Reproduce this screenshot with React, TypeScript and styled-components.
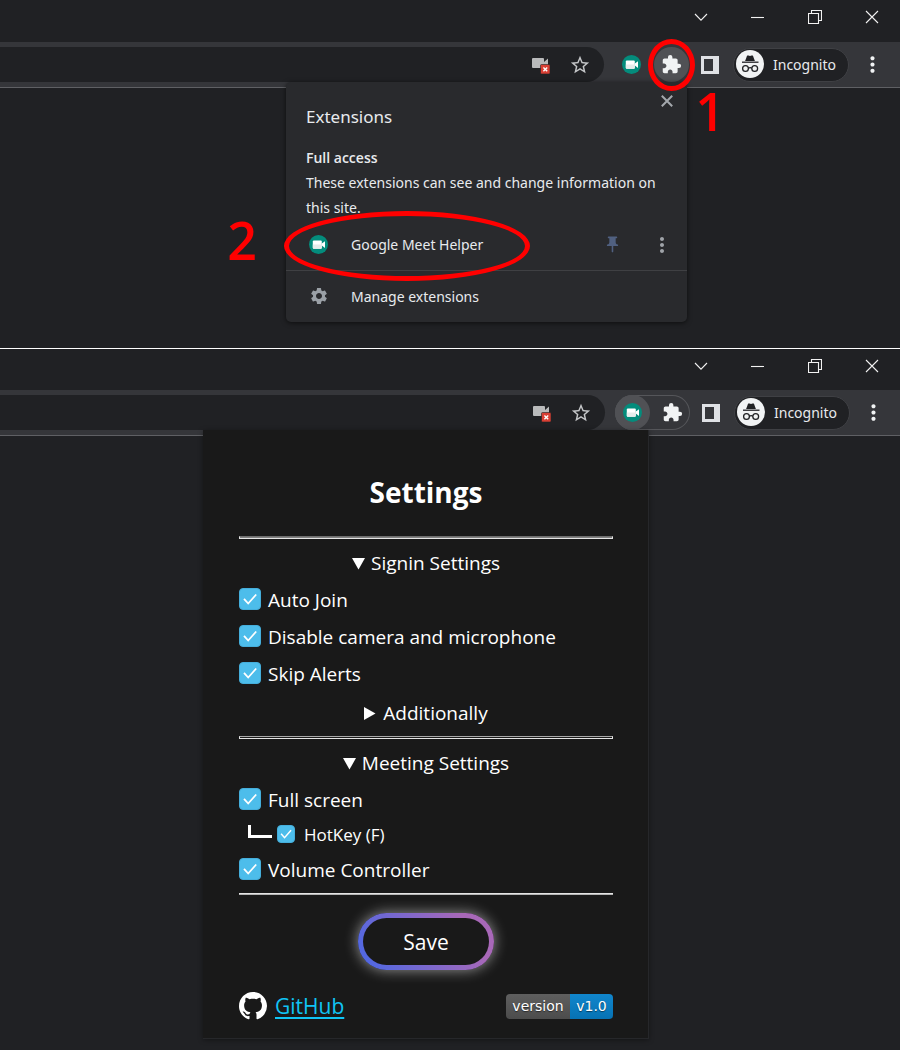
import React from "react";
import styled, { createGlobalStyle, css } from "styled-components";
import { MdExtension, MdStarBorder, MdSettings, MdPushPin, MdMoreVert } from "react-icons/md";

const GlobalStyle = createGlobalStyle`
  *, *::before, *::after { box-sizing: border-box; }
  body { margin: 0; background: #202124; }
  body, button, input { font-family: "Open Sans", "Noto Sans", sans-serif; }
  button { color: inherit; }
`;

const Page = styled.main`
  display: flex;
  flex-direction: column;
  min-height: 100vh;
`;

/* ---------- browser window ---------- */

const BrowserWindow = styled.section<{ $divided?: boolean }>`
  position: relative;
  display: flex;
  flex-direction: column;
  background: #202124;
  color: #e8eaed;
  ${(p) => p.$divided && css`flex: 1;`}
`;

const TitleBar = styled.header<{ $divided?: boolean }>`
  display: flex;
  justify-content: flex-end;
  height: 42px;
  padding-bottom: 8px;
  ${(p) => p.$divided && css`border-top: 1px solid #fff;`}
`;

const CaptionButton = styled.button`
  display: grid;
  place-items: center;
  width: 57px;
  padding: 0;
  border: 0;
  background: none;
`;

const Toolbar = styled.div<{ $inset: number }>`
  display: flex;
  align-items: center;
  height: 46px;
  padding-right: ${(p) => p.$inset}px;
  background: #35363a;
  border-bottom: 1px solid #5f6064;
`;

const AddressBar = styled.div`
  flex: 1;
  display: flex;
  align-items: center;
  justify-content: flex-end;
  gap: 20px;
  height: 35px;
  padding-right: 14px;
  border-radius: 0 18px 18px 0;
  background: #202124;
`;

const IconButton = styled.button<{ $size?: number; $active?: boolean }>`
  display: grid;
  place-content: center;
  flex: none;
  width: ${(p) => p.$size ?? 20}px;
  height: ${(p) => p.$size ?? 20}px;
  padding: 0;
  border: 0;
  border-radius: 50%;
  background: ${(p) => (p.$active ? "#505155" : "none")};
`;

const ActionGroup = styled.div<{ $outlined?: boolean }>`
  display: flex;
  gap: 5px;
  margin: 0 11px 0 10px;
  border-radius: 18px;
  box-shadow: ${(p) => (p.$outlined ? "inset 0 0 0 1px #55565a" : "none")};
`;

const ProfileChip = styled.button`
  display: flex;
  align-items: center;
  gap: 9px;
  width: 116px;
  height: 34px;
  margin-left: 13px;
  padding: 0 0 1px 2px;
  border: 1px solid #3f4044;
  border-radius: 17px;
  background: #202124;
  color: #e8eaed;
  font-family: "Noto Sans", "Open Sans", sans-serif;
  font-size: 14px;
`;

const MenuButton = styled(IconButton)`
  width: 47px;
`;

const PageArea = styled.div<{ $edge: number; $below: number }>`
  display: flex;
  justify-content: flex-end;
  padding: 0 ${(p) => p.$edge}px ${(p) => p.$below}px 0;
`;

/* ---------- extensions menu ---------- */

const ExtensionsMenu = styled.div`
  position: relative;
  width: 401px;
  margin-top: -6px;
  padding-top: 20px;
  border-radius: 5px;
  background: #292a2d;
  box-shadow: 0 1px 5px rgba(0, 0, 0, 0.6);
  font-family: "Noto Sans", "Open Sans", sans-serif;
  font-size: 14px;
`;

const MenuClose = styled(IconButton)`
  position: absolute;
  top: 9px;
  right: 10px;
`;

const MenuTitle = styled.h2`
  margin: 0 20px 13px;
  font-size: 17px;
  font-weight: 400;
  line-height: 30px;
`;

const AccessHeading = styled.h3`
  margin: 0 20px;
  font-family: "Open Sans", "Noto Sans", sans-serif;
  font-size: 14px;
  font-weight: 600;
  line-height: 25px;
`;

const AccessText = styled.p`
  margin: 0 20px;
  line-height: 25px;
`;

const MenuRow = styled.div<{ $separated?: boolean }>`
  display: flex;
  align-items: center;
  height: ${(p) => (p.$separated ? 52 : 50)}px;
  padding: 0 15px 1px 23px;
  ${(p) => p.$separated && css`border-top: 1px solid #3f4043;`}
`;

const MenuItem = styled.button`
  flex: 1;
  display: grid;
  grid-template-columns: 20px 1fr;
  align-items: center;
  column-gap: 22px;
  padding: 0;
  border: 0;
  background: none;
  font-family: inherit;
  font-size: 14px;
  text-align: left;
`;

const RowTools = styled.div`
  display: flex;
  gap: 30px;
`;

/* ---------- annotations ---------- */

const Ring = styled.div<{ $top: number; $right: number; $w: number; $h: number }>`
  position: absolute;
  z-index: 2;
  top: ${(p) => p.$top}px;
  right: ${(p) => p.$right}px;
  width: ${(p) => p.$w}px;
  height: ${(p) => p.$h}px;
  border: 5px solid #f00;
  border-radius: 50%;
  pointer-events: none;
`;

const StepNumber = styled.span<{ $top: number; $right: number }>`
  position: absolute;
  z-index: 2;
  top: ${(p) => p.$top}px;
  right: ${(p) => p.$right}px;
  color: #f00;
  font-size: 52px;
  font-weight: 600;
  line-height: 52px;
`;

/* ---------- settings popup ---------- */

const SettingsPopup = styled.form`
  position: relative;
  width: 446px;
  margin-top: -6px;
  padding: 40px 35px 18px 36px;
  border: 1px solid #26272a;
  border-width: 0 1px 1px 0;
  background: #191919;
  box-shadow: 0 1px 5px rgba(0, 0, 0, 0.4);
  color: #fff;
  font-size: 19px;
`;

const SettingsTitle = styled.h1`
  margin: 0 0 22px;
  font-size: 28px;
  font-weight: 700;
  line-height: 44px;
  text-align: center;
`;

const Rule = styled.hr<{ $look: "filled" | "double" | "plain" }>`
  height: ${(p) => (p.$look === "plain" ? 2 : 3)}px;
  margin: 5px 0 0;
  border: 0 solid #e4e4e4;
  border-width: ${(p) => (p.$look === "plain" ? "1px 0" : "1px")};
  border-top-color: ${(p) => ({ filled: "#6e6e6e", double: "#a8a8a8", plain: "#e4e4e4" })[p.$look]};
  border-bottom-color: ${(p) => (p.$look === "plain" ? "#b4b4b4" : "#e4e4e4")};
  background: ${(p) => (p.$look === "filled" ? "#808080" : "#191919")};
`;

const Section = styled.details``;

const SectionTitle = styled.summary`
  display: flex;
  align-items: center;
  justify-content: center;
  gap: 6px;
  height: 36px;
  margin-top: 6px;
  list-style: none;
  &::-webkit-details-marker { display: none; }
`;

const Nested = styled.details`
  margin-top: -3px;
`;

const Option = styled.label`
  display: flex;
  align-items: center;
  gap: 7px;
  height: 37px;
`;

const SubOption = styled.label`
  display: flex;
  align-items: center;
  gap: 9px;
  height: 33px;
  padding-left: 9px;
  font-size: 17px;
`;

const Branch = styled.span`
  display: flex;
  gap: 5px;
`;

const CheckFrame = styled.span<{ $size: number }>`
  display: grid;
  width: ${(p) => p.$size}px;
  height: ${(p) => p.$size}px;
  margin-bottom: 2px;
  > * { grid-area: 1 / 1; width: 100%; height: 100%; }
  > svg { pointer-events: none; visibility: hidden; }
  > input:checked + svg { visibility: visible; }
`;

const CheckInput = styled.input`
  appearance: none;
  margin: 0;
  border: 1px solid #fff;
  border-radius: 4px;
  &:checked { border-color: #45aedb; background: #4dbdeb; }
`;

const SaveButton = styled.button`
  display: block;
  width: 136px;
  height: 57px;
  margin: 18px auto 0;
  border: 5px solid transparent;
  border-radius: 29px;
  background:
    linear-gradient(#191919, #191919) padding-box,
    linear-gradient(60deg, #5468e0 10%, #a868b8 80%) border-box;
  box-shadow: 0 0 14px rgba(255, 255, 255, 0.55);
  font-size: 21px;
`;

const Footer = styled.footer`
  display: flex;
  align-items: center;
  justify-content: space-between;
  height: 28px;
  margin-top: 22px;
`;

const RepoLink = styled.a`
  display: flex;
  align-items: center;
  gap: 8px;
  color: #10c4f5;
  font-size: 21px;
  text-decoration: none;
  span { text-decoration: underline; text-decoration-thickness: 2px; text-underline-offset: 3px; }
`;

const Badge = styled.span`
  display: flex;
  height: 25px;
  overflow: hidden;
  border-radius: 4px;
  font: 14px/25px "DejaVu Sans", Verdana, sans-serif;
  text-shadow: 0 1px 1px rgba(0, 0, 0, 0.5);
`;

const BadgePart = styled.span<{ $width: number; $from: string; $to: string }>`
  width: ${(p) => p.$width}px;
  background: linear-gradient(${(p) => p.$from}, ${(p) => p.$to});
  text-align: center;
`;

/* ---------- drawings ---------- */

const MeetIcon = () => (
  <svg width="19" height="19" viewBox="0 0 19 19">
    <circle cx="9.5" cy="9.5" r="9.5" fill="#048c7c" />
    <rect x="3.8" y="5.5" width="9" height="8.2" rx="1" fill="#fff" />
    <path d="M3.8 9.5h9v3.2a1 1 0 0 1-1 1h-7a1 1 0 0 1-1-1z" fill="#e6eceb" />
    <path d="M12.8 8.6l3.2-2.4v6.8l-3.2-2.4z" fill="#fff" />
  </svg>
);

const CameraBlockedIcon = () => (
  <svg width="18" height="18" viewBox="0 0 18 18">
    <path d="M1 2h10a1 1 0 0 1 1 1v3l4-3.500V11h-4v1H1a1 1 0 0 1-1-1V3a1 1 0 0 1 1-1z" fill="#b9babb" />
    <rect x="8.5" y="8.5" width="9.5" height="9.5" rx="1" fill="#d93f34" stroke="#202124" strokeWidth=".6" />
    <path d="M11.4 11.4l3.8 3.8m0-3.8l-3.8 3.8" stroke="#fff" strokeWidth="1.4" />
  </svg>
);

const SidePanelIcon = () => (
  <svg width="18" height="18" viewBox="0 0 18 18">
    <path fillRule="evenodd" d="M0 0h18v18H0zM3 3v12h9V3z" fill="#dfe1e5" />
  </svg>
);

const IncognitoIcon = () => (
  <svg width="28" height="28" viewBox="0 0 28 28">
    <circle cx="14" cy="14" r="14" fill="#f1f3f4" />
    <path d="M11.3 5.6c.4-.3.8-.2 1.2 0 1 .4 2 .4 3 0 .5-.2.9-.3 1.2 0 .3.3.5.8.7 1.4L18.9 11H9.1l1.5-4c.2-.6.4-1.1.7-1.4z" fill="#202124" />
    <path d="M6 12.2h16.5" stroke="#202124" strokeWidth="1.3" />
    <g fill="none" stroke="#202124" strokeWidth="1.3">
      <circle cx="9.5" cy="18.5" r="2.9" />
      <circle cx="18.7" cy="18.5" r="2.9" />
      <path d="M12.4 18.2q1.7-1 3.4 0" />
    </g>
  </svg>
);

const Caption = ({ d, label }: { d: string; label: string }) => (
  <CaptionButton type="button" aria-label={label}>
    <svg width="14" height="14" viewBox="0 0 14 14" fill="none" stroke="#f2f2f2" strokeWidth="1.1">
      <path d={d} />
    </svg>
  </CaptionButton>
);

const Triangle = ({ open }: { open?: boolean }) => (
  <svg width="13" height="13" viewBox="0 0 13 13" fill="#fff">
    <path d={open ? "M0 1h13L6.5 12.5z" : "M0 0v13l11.5-6.5z"} />
  </svg>
);

const Elbow = () => (
  <svg width="24" height="14" viewBox="0 0 24 14" fill="none" stroke="#fff" strokeWidth="3">
    <path d="M1.5 0v11.5H24" />
  </svg>
);

const GitHubMark = () => (
  <svg width="28" height="28" viewBox="0 0 16 16" fill="#fff">
    <path d="M8 0C3.58 0 0 3.58 0 8c0 3.54 2.29 6.53 5.47 7.59.4.07.55-.17.55-.38 0-.19-.01-.82-.01-1.49-2.01.37-2.53-.49-2.69-.94-.09-.23-.48-.94-.82-1.13-.28-.15-.68-.52-.01-.53.63-.01 1.08.58 1.23.82.72 1.21 1.87.87 2.33.66.07-.52.28-.87.51-1.07-1.78-.2-3.64-.89-3.64-3.95 0-.87.31-1.59.82-2.15-.08-.2-.36-1.02.08-2.12 0 0 .67-.21 2.2.82.64-.18 1.32-.27 2-.27.68 0 1.36.09 2 .27 1.53-1.04 2.2-.82 2.2-.82.44 1.1.16 1.92.08 2.12.51.56.82 1.27.82 2.15 0 3.07-1.87 3.75-3.65 3.95.29.25.54.73.54 1.48 0 1.07-.01 1.93-.01 2.2 0 .21.15.46.55.38A8.013 8.013 0 0 0 16 8c0-4.42-3.58-8-8-8z" />
  </svg>
);

/* ---------- composed parts ---------- */

const CheckBox = ({ size = 22 }: { size?: number }) => (
  <CheckFrame $size={size}>
    <CheckInput type="checkbox" defaultChecked />
    <svg viewBox="0 0 22 22" fill="none" stroke="#fff" strokeWidth="1.8">
      <path d="M5 10.8l4.2 4.7L17.2 6.5" />
    </svg>
  </CheckFrame>
);

const BrowserBars = ({ divided, popup }: { divided?: boolean; popup: "menu" | "settings" }) => (
  <>
    <TitleBar $divided={divided}>
      <Caption label="Search tabs" d="M1 4l6 6.2L13 4" />
      <Caption label="Minimize" d="M0 7.5h13" />
      <Caption label="Restore" d="M.5 3.5h10v10h-10zM3.5 3.5v-3h10v10h-3" />
      <Caption label="Close" d="M1 1l12 12M13 1L1 13" />
    </TitleBar>
    <Toolbar $inset={divided ? 3 : 4}>
      <AddressBar>
        <IconButton type="button" $size={18} aria-label="Camera blocked"><CameraBlockedIcon /></IconButton>
        <IconButton type="button" aria-label="Bookmark this tab"><MdStarBorder size={22} color="#c4c6c8" /></IconButton>
      </AddressBar>
      <ActionGroup $outlined={popup === "settings"}>
        <IconButton type="button" $size={35} $active={popup === "settings"} aria-label="Google Meet Helper"><MeetIcon /></IconButton>
        <IconButton type="button" $size={35} $active={popup === "menu"} aria-label="Extensions"><MdExtension size={21} color="#f1f3f4" /></IconButton>
      </ActionGroup>
      <IconButton type="button" aria-label="Side panel"><SidePanelIcon /></IconButton>
      <ProfileChip type="button"><IncognitoIcon />Incognito</ProfileChip>
      <MenuButton type="button" aria-label="Browser menu"><MdMoreVert size={25} color="#f1f3f4" /></MenuButton>
    </Toolbar>
  </>
);

export default function App() {
  return (
    <Page>
      <GlobalStyle />
      <BrowserWindow>
        <BrowserBars popup="menu" />
        <PageArea $edge={213} $below={26}>
          <ExtensionsMenu>
            <MenuClose type="button" aria-label="Close">
              <svg width="12" height="12" viewBox="0 0 12 12" stroke="#a4a8ad" strokeWidth="2"><path d="M.8.8l10.4 10.4M11.2.8L.8 11.2" /></svg>
            </MenuClose>
            <MenuTitle>Extensions</MenuTitle>
            <AccessHeading>Full access</AccessHeading>
            <AccessText>These extensions can see and change information on this site.</AccessText>
            <MenuRow>
              <MenuItem type="button"><MeetIcon />Google Meet Helper</MenuItem>
              <RowTools>
                <IconButton type="button" aria-label="Pin"><MdPushPin size={19} color="#506080" /></IconButton>
                <IconButton type="button" aria-label="More options"><MdMoreVert size={24} color="#9fa3a8" /></IconButton>
              </RowTools>
            </MenuRow>
            <MenuRow $separated>
              <MenuItem type="button"><MdSettings size={20} color="#9aa0a6" />Manage extensions</MenuItem>
            </MenuRow>
          </ExtensionsMenu>
        </PageArea>
        <Ring $top={39} $right={205} $w={47} $h={52} />
        <StepNumber $top={85} $right={175}>1</StepNumber>
        <Ring $top={211} $right={370} $w={246} $h={70} />
        <StepNumber $top={214} $right={643}>2</StepNumber>
      </BrowserWindow>

      <BrowserWindow $divided>
        <BrowserBars divided popup="settings" />
        <PageArea $edge={251} $below={11}>
          <SettingsPopup onSubmit={(e) => e.preventDefault()}>
            <SettingsTitle>Settings</SettingsTitle>
            <Rule $look="filled" />
            <Section open>
              <SectionTitle><Triangle open />Signin Settings</SectionTitle>
              <Option><CheckBox />Auto Join</Option>
              <Option><CheckBox />Disable camera and microphone</Option>
              <Option><CheckBox />Skip Alerts</Option>
              <Nested>
                <SectionTitle><Triangle />Additionally</SectionTitle>
              </Nested>
            </Section>
            <Rule $look="double" />
            <Section open>
              <SectionTitle><Triangle open />Meeting Settings</SectionTitle>
              <Option><CheckBox />Full screen</Option>
              <SubOption><Branch><Elbow /><CheckBox size={18} /></Branch>HotKey (F)</SubOption>
              <Option><CheckBox />Volume Controller</Option>
            </Section>
            <Rule $look="plain" />
            <SaveButton type="submit">Save</SaveButton>
            <Footer>
              <RepoLink href="#github"><GitHubMark /><span>GitHub</span></RepoLink>
              <Badge>
                <BadgePart $width={64} $from="#5f5f5f" $to="#4c4c4c">version</BadgePart>
                <BadgePart $width={43} $from="#1186cc" $to="#0672b4">v1.0</BadgePart>
              </Badge>
            </Footer>
          </SettingsPopup>
        </PageArea>
      </BrowserWindow>
    </Page>
  );
}
